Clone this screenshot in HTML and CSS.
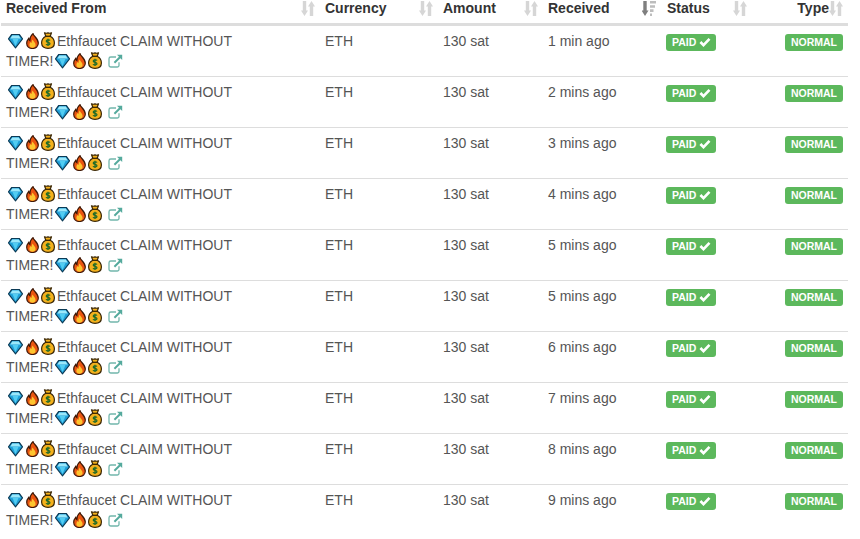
FILE: index.html
```html
<!DOCTYPE html>
<html lang="en">
<head>
<meta charset="utf-8">
<title>Received payments</title>
<link rel="stylesheet" href="styles.css">
</head>
<body>
<svg class="defs" width="0" height="0" aria-hidden="true">
  <defs>
    <symbol id="gem" viewBox="0 0 16 16" preserveAspectRatio="none">
      <path d="M4 1.500h8l3.500 4.300L8 14.800.5 5.800z" fill="#1f9fd8" stroke="#0b3a55" stroke-width="1.200" stroke-linejoin="round"/>
      <path d="M4.500 2.600h7l2 3H2.500z" fill="#9be8fa"/>
      <path d="M4.800 6h6.400L8 13z" fill="#52cdf2"/>
    </symbol>
    <symbol id="fire" viewBox="0 0 13 16">
      <path d="M7 .6c.6 2.600 5.300 5 5.300 9.500 0 3.200-2.500 5.400-5.800 5.400S.7 13.300.7 10.200c0-2 1-3.600 2-4.800.2 1.200.6 1.900 1.200 2.200C3.800 5 5 2.400 7 .6z" fill="#ea5510" stroke="#3f1806" stroke-width="1.200"/>
      <path d="M6.700 6.400c.4 1.700 2.900 2.900 2.900 5.500 0 1.800-1.400 2.800-3.100 2.800s-3.100-1-3.100-2.800c0-1.400.8-2.100 1.400-2.800.2.500.4.900.8 1 0-1.600.4-2.700 1.100-3.700z" fill="#fdc52f"/>
    </symbol>
    <symbol id="bag" viewBox="0 0 14 17">
      <path d="M3.500.8c1.200.6 2.300.6 3.500.1 1.200.5 2.300.5 3.500-.1L9.200 4.300c2.600 1.400 4.200 4 4.200 6.700 0 3.500-2.700 5.300-6.400 5.300S.6 14.500.6 11c0-2.700 1.600-5.300 4.200-6.700z" fill="#f4b11c" stroke="#382505" stroke-width="1.200" stroke-linejoin="round"/>
      <path d="M4.500 4.300h5" stroke="#382505" stroke-width="1.300"/>
      <path d="M9 8.400c-.4-.8-3.700-1-3.800.6-.1 1.700 3.800 1 3.800 2.800 0 1.500-3.400 1.400-4 .4M7 6.800v7.100" fill="none" stroke="#1d6a29" stroke-width="1.200"/>
    </symbol>
    <symbol id="ext" viewBox="0 0 15 14">
      <path d="M11 8.200v3a1.800 1.800 0 0 1-1.800 1.800H2.800A1.800 1.800 0 0 1 1 11.200V4.800A1.800 1.800 0 0 1 2.800 3H8" fill="none" stroke="#72b6ac" stroke-width="1.300"/>
      <path d="M9 .8h5.200V6l-1.800-1.800-5.300 5.300-1.400-1.400 5.300-5.300z" fill="#55aa9d"/>
    </symbol>
    <symbol id="sort" viewBox="0 0 14 15">
      <path d="M1.800 0h3.400v9.500h1.800L3.500 15 0 9.500h1.800z" fill="#d6d6d6"/>
      <path d="M12.200 15H8.800V5.500H7L10.500 0 14 5.500h-1.800z" fill="#d6d6d6"/>
    </symbol>
    <symbol id="sort-active" viewBox="0 0 14 15">
      <path d="M1.300 0h3.400v9.500h1.800L3 15-.5 9.500h1.800z" fill="#7f7f7f"/>
      <path d="M8 0h6v2.600H8zM8 4.200h5v2.600H8zM8 8.300h3.500v2.600H8zM8 12.400h2v2.600H8z" fill="#bdbdbd"/>
    </symbol>
    <symbol id="check" viewBox="0 0 12 10">
      <path d="M1.400 5l3.100 3.100 6-6.200" fill="none" stroke="#fff" stroke-width="2.700"/>
    </symbol>
  </defs>
</svg>
<table class="payments">
  <colgroup>
    <col class="col-from"><col class="col-currency"><col class="col-amount"><col class="col-received"><col class="col-status"><col class="col-type">
  </colgroup>
  <thead>
    <tr>
      <th><div class="head"><span>Received From</span><svg class="sort"><use href="#sort"/></svg></div></th>
      <th><div class="head"><span>Currency</span><svg class="sort"><use href="#sort"/></svg></div></th>
      <th><div class="head"><span>Amount</span><svg class="sort"><use href="#sort"/></svg></div></th>
      <th><div class="head"><span>Received</span><svg class="sort"><use href="#sort-active"/></svg></div></th>
      <th><div class="head"><span class="nudge">Status</span><svg class="sort"><use href="#sort"/></svg></div></th>
      <th><div class="head head-end"><span>Type</span><svg class="sort"><use href="#sort"/></svg></div></th>
    </tr>
  </thead>
  <tbody>
    <tr><td><a class="from" href="#"><svg class="emoji first"><use href="#gem"/></svg><svg class="emoji fire"><use href="#fire"/></svg><svg class="emoji bag"><use href="#bag"/></svg>Ethfaucet CLAIM WITHOUT TIMER!<svg class="emoji"><use href="#gem"/></svg><svg class="emoji fire"><use href="#fire"/></svg><svg class="emoji bag"><use href="#bag"/></svg><svg class="ext"><use href="#ext"/></svg></a></td><td>ETH</td><td>130 sat</td><td>1 min ago</td><td><span class="label">PAID<svg class="check"><use href="#check"/></svg></span></td><td class="end"><span class="label">NORMAL</span></td></tr>
    <tr><td><a class="from" href="#"><svg class="emoji first"><use href="#gem"/></svg><svg class="emoji fire"><use href="#fire"/></svg><svg class="emoji bag"><use href="#bag"/></svg>Ethfaucet CLAIM WITHOUT TIMER!<svg class="emoji"><use href="#gem"/></svg><svg class="emoji fire"><use href="#fire"/></svg><svg class="emoji bag"><use href="#bag"/></svg><svg class="ext"><use href="#ext"/></svg></a></td><td>ETH</td><td>130 sat</td><td>2 mins ago</td><td><span class="label">PAID<svg class="check"><use href="#check"/></svg></span></td><td class="end"><span class="label">NORMAL</span></td></tr>
    <tr><td><a class="from" href="#"><svg class="emoji first"><use href="#gem"/></svg><svg class="emoji fire"><use href="#fire"/></svg><svg class="emoji bag"><use href="#bag"/></svg>Ethfaucet CLAIM WITHOUT TIMER!<svg class="emoji"><use href="#gem"/></svg><svg class="emoji fire"><use href="#fire"/></svg><svg class="emoji bag"><use href="#bag"/></svg><svg class="ext"><use href="#ext"/></svg></a></td><td>ETH</td><td>130 sat</td><td>3 mins ago</td><td><span class="label">PAID<svg class="check"><use href="#check"/></svg></span></td><td class="end"><span class="label">NORMAL</span></td></tr>
    <tr><td><a class="from" href="#"><svg class="emoji first"><use href="#gem"/></svg><svg class="emoji fire"><use href="#fire"/></svg><svg class="emoji bag"><use href="#bag"/></svg>Ethfaucet CLAIM WITHOUT TIMER!<svg class="emoji"><use href="#gem"/></svg><svg class="emoji fire"><use href="#fire"/></svg><svg class="emoji bag"><use href="#bag"/></svg><svg class="ext"><use href="#ext"/></svg></a></td><td>ETH</td><td>130 sat</td><td>4 mins ago</td><td><span class="label">PAID<svg class="check"><use href="#check"/></svg></span></td><td class="end"><span class="label">NORMAL</span></td></tr>
    <tr><td><a class="from" href="#"><svg class="emoji first"><use href="#gem"/></svg><svg class="emoji fire"><use href="#fire"/></svg><svg class="emoji bag"><use href="#bag"/></svg>Ethfaucet CLAIM WITHOUT TIMER!<svg class="emoji"><use href="#gem"/></svg><svg class="emoji fire"><use href="#fire"/></svg><svg class="emoji bag"><use href="#bag"/></svg><svg class="ext"><use href="#ext"/></svg></a></td><td>ETH</td><td>130 sat</td><td>5 mins ago</td><td><span class="label">PAID<svg class="check"><use href="#check"/></svg></span></td><td class="end"><span class="label">NORMAL</span></td></tr>
    <tr><td><a class="from" href="#"><svg class="emoji first"><use href="#gem"/></svg><svg class="emoji fire"><use href="#fire"/></svg><svg class="emoji bag"><use href="#bag"/></svg>Ethfaucet CLAIM WITHOUT TIMER!<svg class="emoji"><use href="#gem"/></svg><svg class="emoji fire"><use href="#fire"/></svg><svg class="emoji bag"><use href="#bag"/></svg><svg class="ext"><use href="#ext"/></svg></a></td><td>ETH</td><td>130 sat</td><td>5 mins ago</td><td><span class="label">PAID<svg class="check"><use href="#check"/></svg></span></td><td class="end"><span class="label">NORMAL</span></td></tr>
    <tr><td><a class="from" href="#"><svg class="emoji first"><use href="#gem"/></svg><svg class="emoji fire"><use href="#fire"/></svg><svg class="emoji bag"><use href="#bag"/></svg>Ethfaucet CLAIM WITHOUT TIMER!<svg class="emoji"><use href="#gem"/></svg><svg class="emoji fire"><use href="#fire"/></svg><svg class="emoji bag"><use href="#bag"/></svg><svg class="ext"><use href="#ext"/></svg></a></td><td>ETH</td><td>130 sat</td><td>6 mins ago</td><td><span class="label">PAID<svg class="check"><use href="#check"/></svg></span></td><td class="end"><span class="label">NORMAL</span></td></tr>
    <tr><td><a class="from" href="#"><svg class="emoji first"><use href="#gem"/></svg><svg class="emoji fire"><use href="#fire"/></svg><svg class="emoji bag"><use href="#bag"/></svg>Ethfaucet CLAIM WITHOUT TIMER!<svg class="emoji"><use href="#gem"/></svg><svg class="emoji fire"><use href="#fire"/></svg><svg class="emoji bag"><use href="#bag"/></svg><svg class="ext"><use href="#ext"/></svg></a></td><td>ETH</td><td>130 sat</td><td>7 mins ago</td><td><span class="label">PAID<svg class="check"><use href="#check"/></svg></span></td><td class="end"><span class="label">NORMAL</span></td></tr>
    <tr><td><a class="from" href="#"><svg class="emoji first"><use href="#gem"/></svg><svg class="emoji fire"><use href="#fire"/></svg><svg class="emoji bag"><use href="#bag"/></svg>Ethfaucet CLAIM WITHOUT TIMER!<svg class="emoji"><use href="#gem"/></svg><svg class="emoji fire"><use href="#fire"/></svg><svg class="emoji bag"><use href="#bag"/></svg><svg class="ext"><use href="#ext"/></svg></a></td><td>ETH</td><td>130 sat</td><td>8 mins ago</td><td><span class="label">PAID<svg class="check"><use href="#check"/></svg></span></td><td class="end"><span class="label">NORMAL</span></td></tr>
    <tr><td><a class="from" href="#"><svg class="emoji first"><use href="#gem"/></svg><svg class="emoji fire"><use href="#fire"/></svg><svg class="emoji bag"><use href="#bag"/></svg>Ethfaucet CLAIM WITHOUT TIMER!<svg class="emoji"><use href="#gem"/></svg><svg class="emoji fire"><use href="#fire"/></svg><svg class="emoji bag"><use href="#bag"/></svg><svg class="ext"><use href="#ext"/></svg></a></td><td>ETH</td><td>130 sat</td><td>9 mins ago</td><td><span class="label">PAID<svg class="check"><use href="#check"/></svg></span></td><td class="end"><span class="label">NORMAL</span></td></tr>
  </tbody>
</table>
</body>
</html>
```
FILE: styles.css
```css
html, body {
  margin: 0;
  padding: 0;
  background: #fff;
  overflow: hidden;
}
body {
  padding-left: 1px;
  font-family: "Liberation Sans", Arial, sans-serif;
  font-size: 14px;
  line-height: 20px;
  color: #555;
}
.defs { display: block; height: 0; }
.payments {
  width: 847px;
  table-layout: fixed;
  border-collapse: separate;
  border-spacing: 0;
}
.col-from { width: 319px; }
.col-currency { width: 118px; }
.col-amount { width: 105px; }
.col-received { width: 118px; }
.col-status { width: 91px; }
.col-type { width: 96px; }
th {
  padding: 0 5px 7px;
  text-align: left;
  font-weight: 700;
  line-height: 16px;
  color: #333;
  border-bottom: 3px solid #ddd;
}
.head {
  display: flex;
  justify-content: space-between;
  align-items: flex-start;
  height: 16px;
}
.head-end { justify-content: flex-end; }
.nudge { margin-left: 1px; }
.sort {
  width: 14px;
  height: 15px;
  margin-top: 1px;
  flex: none;
}
td {
  padding: 5px;
  vertical-align: top;
  border-bottom: 1px solid #ddd;
}
tbody tr:last-child td { border-bottom: 0; }
.end { text-align: right; }
.from {
  display: block;
  max-width: 235px;
  color: #555;
  text-decoration: none;
}
.emoji {
  display: inline-block;
  width: 15px;
  height: 16px;
  margin-right: 3px;
  vertical-align: -3px;
}
.emoji.first { margin-left: 2px; }
.emoji:nth-of-type(4) { margin-left: 2px; }
.emoji.fire { width: 13px; margin: 0 2px 0 0; }
.emoji.bag { width: 14px; height: 17px; margin-right: 2px; vertical-align: -3px; }
.ext {
  display: inline-block;
  width: 15px;
  height: 14px;
  margin-left: 4px;
  vertical-align: -2px;
}
.label {
  display: inline-block;
  margin-top: 3px;
  padding: 0 6px;
  height: 17px;
  line-height: 16px;
  vertical-align: top;
  background: #5cb85c;
  border-radius: 3px;
  color: #fff;
  font-size: 10.5px;
  font-weight: 700;
}
.check {
  display: inline-block;
  width: 12px;
  height: 10px;
  margin: 0 -1px 0 3px;
  vertical-align: -1px;
}
```
